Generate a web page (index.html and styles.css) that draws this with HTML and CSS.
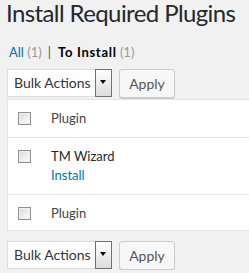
FILE: index.html
```html
<!DOCTYPE html>
<html lang="en">
<head>
  <meta charset="UTF-8">
  <title>Install Required Plugins</title>
  <link rel="stylesheet" href="styles.css">
</head>
<body>
<div class="wrap">
  <h1>Install Required Plugins</h1>
  <ul class="subsubsub">
    <li><a href="#">All <span class="count">(1)</span></a><span class="sep">|</span></li>
    <li><a href="#" class="current"><b>To Install</b> <span class="count">(1)</span></a></li>
  </ul>

  <div class="tablenav">
    <div class="select">
      <span class="select-label">Bulk Actions</span>
      <span class="select-arrow"></span>
    </div>
    <button type="button" class="button">Apply</button>
  </div>

  <table class="plugins">
    <tr>
      <td class="check"><input type="checkbox"></td>
      <td>Plugin</td>
    </tr>
    <tr>
      <td class="check"><input type="checkbox"></td>
      <td>
        <div class="name">TM Wizard</div>
        <div class="row-actions"><a href="#">Install</a></div>
      </td>
    </tr>
    <tr>
      <td class="check"><input type="checkbox"></td>
      <td>Plugin</td>
    </tr>
  </table>

  <div class="tablenav bottom">
    <div class="select">
      <span class="select-label">Bulk Actions</span>
      <span class="select-arrow"></span>
    </div>
    <button type="button" class="button">Apply</button>
  </div>
</div>
</body>
</html>
```

FILE: styles.css
```css
body {
  margin: 0;
  background: #f1f1f1;
  color: #444;
  font-family: Lato, "Open Sans", sans-serif;
  font-size: 13px;
  overflow: hidden;
}
a {
  color: #0073aa;
  text-decoration: none;
}
.wrap {
  padding-left: 7px;
}
h1 {
  margin: 0 0 0 -1px;
  font-size: 24px;
  font-weight: 400;
  line-height: 26px;
  letter-spacing: -0.6px;
  color: #23282d;
  white-space: nowrap;
}
.subsubsub {
  list-style: none;
  margin: 16px 0 0 0;
  padding: 0 0 0 2px;
  display: flex;
  line-height: 20px;
  color: #666;
}
.subsubsub .count {
  color: #999;
}
.subsubsub .current {
  color: #000;
}
.subsubsub .current b {
  letter-spacing: 0.7px;
}
.sep {
  color: #555;
  margin: 0 7px 0 6px;
}
.tablenav {
  display: flex;
  align-items: center;
  gap: 7px;
  height: 30px;
  margin-top: 6px;
}
.tablenav.bottom {
  margin-top: 9px;
}
.select {
  display: flex;
  height: 28px;
  box-sizing: border-box;
  background: #fff;
  border: 1px solid #ddd;
  border-right: none;
  font-size: 14px;
  color: #32373c;
}
.select-label {
  padding: 0 0 0 6px;
  line-height: 26px;
  width: 81px;
  white-space: nowrap;
}
.select-arrow {
  width: 17px;
  margin: -1px 0;
  box-sizing: border-box;
  border: 1px solid #707070;
  background: linear-gradient(#fff, #dcdcdc);
  position: relative;
}
.select-arrow::after {
  content: "";
  position: absolute;
  left: 4px;
  top: 10px;
  border-left: 3px solid transparent;
  border-right: 3px solid transparent;
  border-top: 4px solid #000;
}
.button {
  height: 29px;
  width: 56px;
  padding: 0;
  font-family: inherit;
  font-size: 14px;
  color: #555;
  background: #f7f7f7;
  border: 1px solid #ccc;
  border-radius: 3px;
  box-shadow: 0 1px 0 #ccc;
}
.plugins {
  width: calc(100% + 20px);
  margin-top: 1px;
  border-collapse: collapse;
  background: #fff;
  border: 1px solid #e5e5e5;
}
.plugins td {
  padding: 9px 10px;
  line-height: 19px;
  vertical-align: top;
  color: #444;
}
.plugins tr + tr td {
  border-top: 1px solid #e5e5e5;
}
.plugins tr:last-child td {
  padding-bottom: 7px;
}
.plugins td.check {
  width: 13px;
  padding-top: 12px;
  padding-bottom: 0;
}
.plugins .name {
  color: #23282d;
}
input[type=checkbox] {
  appearance: none;
  display: block;
  margin: 0;
  width: 13px;
  height: 13px;
  border: 1px solid #8f8f8f;
  background: linear-gradient(135deg, #d8d8d8, #fff);
  box-shadow: inset 0 0 0 1px #f0f0f0;
}
```
